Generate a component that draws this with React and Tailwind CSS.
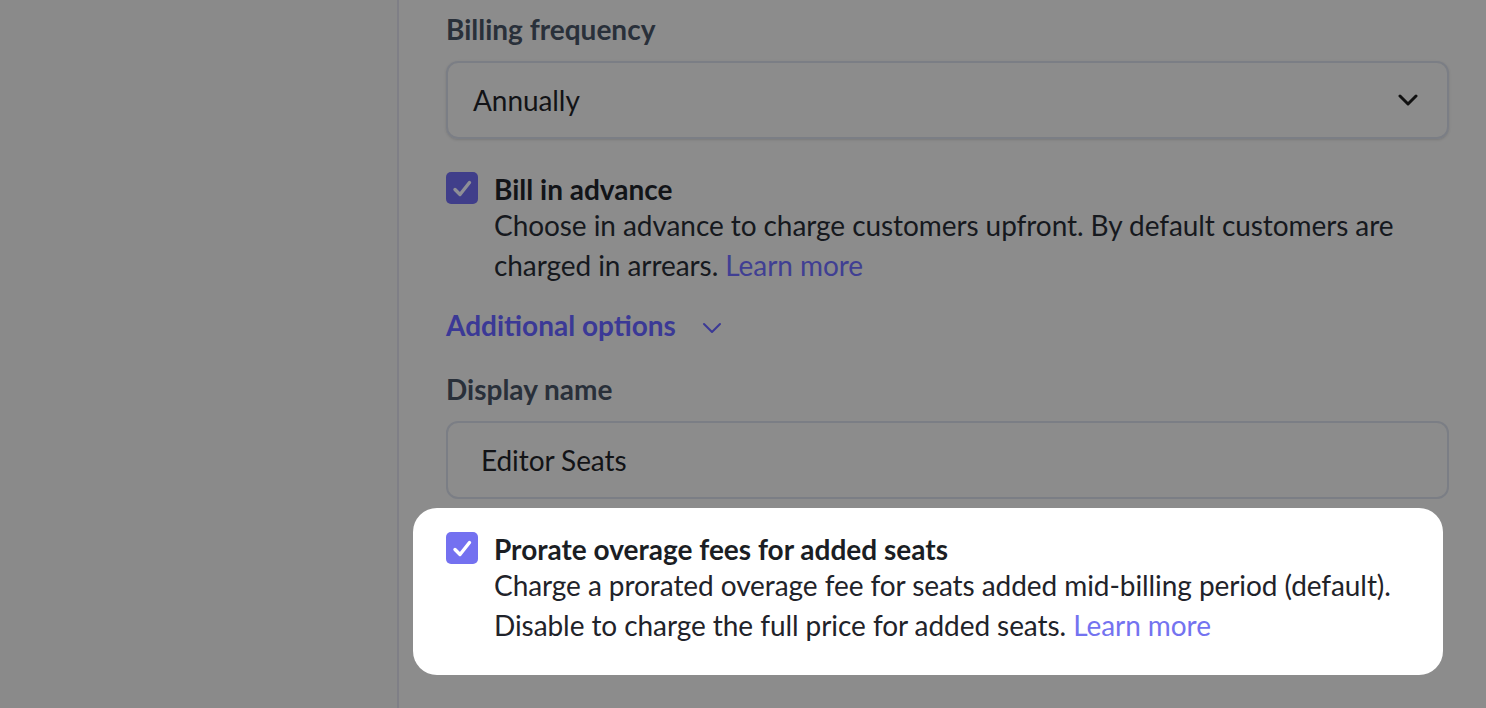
import React from 'react';

function Check() {
  return (
    <svg viewBox="0 0 32 32" className="w-[32px] h-[32px]" fill="none">
      <path d="M9 17.5l5 5 9.5-12" stroke="currentColor" strokeWidth="3.4" strokeLinecap="round" strokeLinejoin="round" />
    </svg>
  );
}

function Chevron({ className, width = 2 }) {
  return (
    <svg viewBox="0 0 20 12" className={className} fill="none">
      <path d="M2 2l8 8 8-8" stroke="currentColor" strokeWidth={width} strokeLinecap="round" strokeLinejoin="round" />
    </svg>
  );
}

export default function App() {
  return (
    <div className="flex h-[708px] w-full overflow-hidden bg-[#8c8c8c]" style={{ fontFamily: 'Lato, "Noto Sans", sans-serif' }}>
      <aside className="w-[399px] shrink-0 bg-[#8a8a8a] border-r-2 border-[#7f7f86]" />

      <main className="flex-1 pl-[47px] pr-[37px] pt-[9px]">
        <label className="block text-[28px] leading-[40px] font-bold text-[#29303a]">Billing frequency</label>
        <div className="mt-3 h-[78px] rounded-[12px] border-2 border-[#7b7e85] shadow-sm flex items-center justify-between pl-[25px] pr-[29px]">
          <span className="text-[28px] text-[#121316] tracking-[-0.07px]">Annually</span>
          <Chevron className="w-[20px] h-[12px] text-[#111]" width={3} />
        </div>

        <div className="mt-[34px] flex items-start gap-4">
          <div className="mt-[-1px] w-[32px] h-[32px] shrink-0 rounded-[5px] bg-[#403e8a] text-[#8e8e96] flex items-center justify-center">
            <Check />
          </div>
          <div>
            <div className="text-[28px] leading-[32px] font-bold text-[#121418]">Bill in advance</div>
            <p className="text-[28px] leading-[40px] text-[#16191e] tracking-[-0.07px]">
              Choose in advance to charge customers upfront. By default customers are charged in arrears.{' '}
              <span className="text-[#403f93]">Learn more</span>
            </p>
          </div>
        </div>

        <div className="mt-5 flex items-center gap-[26px] text-[#3b3996]">
          <span className="text-[28px] leading-[40px] font-bold">Additional options</span>
          <Chevron className="w-[20px] h-[12px] mt-[6px]" width={2} />
        </div>

        <label className="mt-6 block text-[28px] leading-[40px] font-bold text-[#29303a]">Display name</label>
        <div className="mt-3 h-[78px] rounded-[12px] border-2 border-[#7b7e85] flex items-center pl-[33px]">
          <span className="text-[28px] text-[#121316] tracking-[-0.07px]">Editor Seats</span>
        </div>

        <div className="mt-[9px] -ml-[33px] w-[1030px] bg-white rounded-[24px] pl-[33px] pr-6 pt-[25px] pb-[30px] flex items-start gap-4">
          <div className="mt-[-1px] w-[32px] h-[32px] shrink-0 rounded-[5px] bg-[#7471f0] text-white flex items-center justify-center">
            <Check />
          </div>
          <div>
            <div className="text-[28px] leading-[32px] font-bold text-[#1b1e24]">Prorate overage fees for added seats</div>
            <p className="text-[28px] leading-[40px] text-[#1f232a] tracking-[-0.07px]">
              Charge a prorated overage fee for seats added mid-billing period (default). Disable to charge the full price for added seats.{' '}
              <span className="text-[#7473f0]">Learn more</span>
            </p>
          </div>
        </div>
      </main>
    </div>
  );
}
